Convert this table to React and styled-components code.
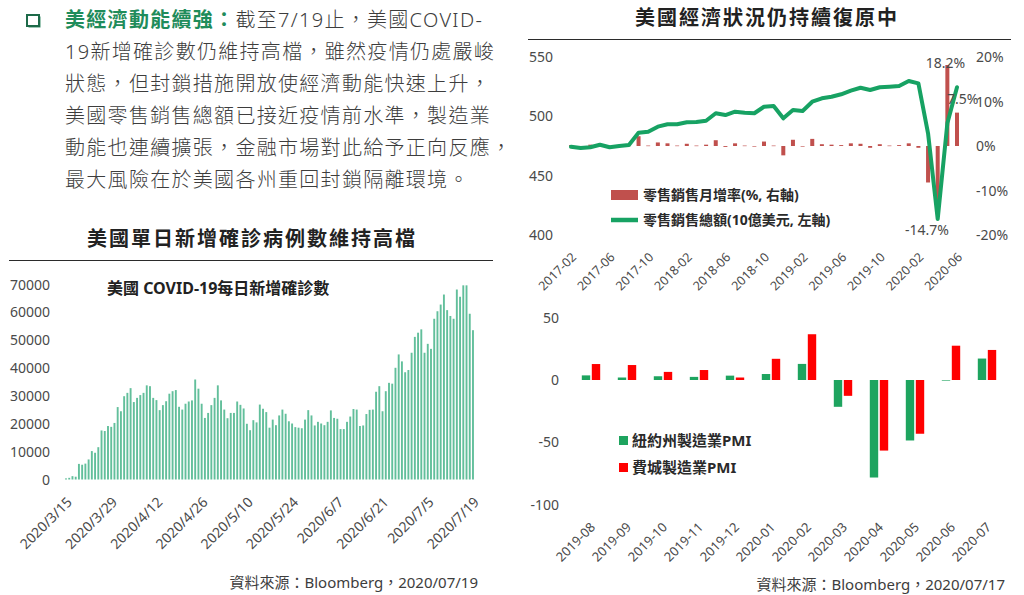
import React from "react";
import styled, { createGlobalStyle } from "styled-components";

const COLORS = {
  text: "#3d3d3d",
  dark: "#222222",
  axis: "#4a4a4a",
  accent: "#1f8c5b",
  icon: "#1d6a49",
  covid: "#62bf9b",
  line: "#17a263",
  retail: "#c0504d",
  pmiGreen: "#1ea45f",
  pmiRed: "#ff0000",
};

// 2020/3/15 - 2020/7/19, thousands of new cases per day
const covidCases = [
  0.4, 0.6, 1.2, 1.0, 5.6, 5.3, 5.7, 7.2, 10.2, 9.6, 11.6, 17.6, 17.4, 19.2,
  18.9, 20.3, 26, 24.5, 29.9, 31.1, 32.8, 27.8, 29.3, 30.3, 31.1, 33.8, 33.5,
  29.3, 28.5, 24.9, 26.7, 28.1, 30.8, 31.7, 32.1, 26.1, 25.1, 27.2, 28, 28.4,
  35.9, 32.6, 27.2, 22.1, 23.9, 26.7, 29.3, 33.8, 28.4, 25.1, 22, 23.9, 23.9,
  28, 26.8, 25.5, 20, 17.7, 21.3, 20.5, 26.9, 25.4, 24.2, 18.6, 21.5, 19.5, 23,
  25.1, 23.6, 20.9, 20.1, 18.8, 18.6, 18.4, 21.5, 24.9, 23, 19.4, 20.7, 20.1,
  19.5, 20.7, 24.8, 22.1, 21.8, 18.1, 18.1, 20.7, 22.6, 25.3, 25.1, 19.2, 19.4,
  23.5, 25, 25.1, 31.5, 33.5, 24.5, 31.7, 34.7, 34.4, 40.1, 44.9, 42.4, 38.5,
  39.3, 45.5, 51.2, 52.7, 53.9, 45.5, 48.7, 46.9, 57.7, 60.4, 62.8, 66.4, 60.8,
  58.7, 57.7, 68.2, 65.6, 69.7, 69.7, 59.5, 53.6,
];
const covidDates = [
  "2020/3/15",
  "2020/3/29",
  "2020/4/12",
  "2020/4/26",
  "2020/5/10",
  "2020/5/24",
  "2020/6/7",
  "2020/6/21",
  "2020/7/5",
  "2020/7/19",
];

// 2017-02 - 2020-06
const retailTotal = [
  474.4, 473.3, 473.9, 476.1, 473.9, 475.0, 475.8, 486.2, 487.0, 491.3, 493.3,
  493.3, 495.0, 495.2, 496.3, 502.6, 501.1, 503.9, 503.1, 502.6, 508.1, 508.7,
  498.3, 505.3, 504.5, 512.3, 515.2, 516.5, 518.6, 521.6, 524.1, 522.2, 524.5,
  525.0, 525.6, 529.8, 527.8, 485.7, 413.5, 494.1, 524.5,
];
const retailGrowth = [
  0.2, -0.2, 0.3, 0.5, -0.2, 0.2, 0.1, 2.2, 0.1, 0.8, 0.6, 0.1, 0.5, 0.1, 0.3,
  1.3, -0.2, 0.6, 0.1, -0.1, 1.0, 0.1, -2.1, 1.4, -0.1, 1.6, 0.4, 0.3, 0.2, 0.6,
  0.5, -0.4, 0.4, 0.1, 0.2, 0.6, -0.4, -8.2, -14.7, 18.2, 7.5,
];
const retailMonths = [
  "2017-02",
  "2017-06",
  "2017-10",
  "2018-02",
  "2018-06",
  "2018-10",
  "2019-02",
  "2019-06",
  "2019-10",
  "2020-02",
  "2020-06",
];

const pmiData = [
  { month: "2019-08", ny: 3.7, phil: 12.8 },
  { month: "2019-09", ny: 2, phil: 12 },
  { month: "2019-10", ny: 3, phil: 6.5 },
  { month: "2019-11", ny: 2.5, phil: 8 },
  { month: "2019-12", ny: 3.5, phil: 2 },
  { month: "2020-01", ny: 4.8, phil: 17 },
  { month: "2020-02", ny: 12.9, phil: 36.7 },
  { month: "2020-03", ny: -21.5, phil: -12.7 },
  { month: "2020-04", ny: -78.2, phil: -56.6 },
  { month: "2020-05", ny: -48.5, phil: -43.1 },
  { month: "2020-06", ny: -0.2, phil: 27.5 },
  { month: "2020-07", ny: 17.2, phil: 24.1 },
];

const covidX = (k) => 66 + k * 3.23;
const covidY = (v) => 480.5 - (v * 195) / 70;
const salesX = (i) => 571 + i * 9.65;
const salesY = (v) => 235 - ((v - 400) * 178) / 150;
const pctY = (p) => 146 - p * 4.45;
const pmiX = (j) => 591 + j * 36;
const pmiY = (v) => 380 - v * 1.247;

const bar = (x, y0, y1, width) => ({
  x: x - width / 2,
  y: Math.min(y0, y1),
  width,
  height: Math.max(Math.abs(y1 - y0), 0.6),
});

function CheckIcon() {
  return (
    <Icon viewBox="0 0 16 15" width="16" height="15">
      <rect x="2.5" y="2.5" width="12" height="11" fill="#3f8f6c" />
      <rect x="1" y="1" width="12" height="11" fill="#fff" stroke={COLORS.icon} strokeWidth="2" />
    </Icon>
  );
}

function CovidChart() {
  const yTicks = [0, 10, 20, 30, 40, 50, 60, 70];
  return (
    <ChartSvg viewBox="0 262 510 310" width="510" height="310">
      {yTicks.map((t) => (
        <AxisText key={t} x="50" y={covidY(t) + 5} textAnchor="end">
          {t * 1000}
        </AxisText>
      ))}
      <InnerTitle x="107" y="295">
        美國 COVID-19每日新增確診數
      </InnerTitle>
      {covidCases.map((v, k) => (
        <rect key={k} {...bar(covidX(k), covidY(0), covidY(v), 1.9)} fill={COLORS.covid} />
      ))}
      {covidDates.map((d, n) => {
        const x = covidX(n * 14) + 7;
        return (
          <TickText key={d} x={x} y="504" textAnchor="end" transform={`rotate(-45 ${x} 504)`}>
            {d}
          </TickText>
        );
      })}
    </ChartSvg>
  );
}

function RetailChart() {
  const leftTicks = [550, 500, 450, 400];
  const rightTicks = [20, 10, 0, -10, -20];
  const points = retailTotal.map((v, i) => `${salesX(i)},${salesY(v)}`).join(" ");
  return (
    <ChartSvg viewBox="510 40 514 256" width="514" height="256">
      {leftTicks.map((t) => (
        <AxisText key={t} x="553" y={salesY(t) + 5} textAnchor="end">
          {t}
        </AxisText>
      ))}
      {rightTicks.map((t) => (
        <AxisText key={t} x="976" y={pctY(t) + 5}>
          {`${t}%`}
        </AxisText>
      ))}
      {retailGrowth.map((p, i) => (
        <rect key={i} {...bar(salesX(i), pctY(0), pctY(p), 4)} fill={COLORS.retail} />
      ))}
      <polyline
        points={points}
        fill="none"
        stroke={COLORS.line}
        strokeWidth="4"
        strokeLinejoin="round"
        strokeLinecap="round"
      />
      <AxisText x={salesX(39) - 2} y="68" textAnchor="middle">18.2%</AxisText>
      <AxisText x="947" y="104">7.5%</AxisText>
      <AxisText x="927" y="235" textAnchor="middle">-14.7%</AxisText>
      <rect x="611" y="190" width="27" height="10" fill={COLORS.retail} />
      <LegendText x="643" y="200">零售銷售月增率(%, 右軸)</LegendText>
      <line x1="611" y1="220" x2="638" y2="220" stroke={COLORS.line} strokeWidth="4.5" />
      <LegendText x="643" y="225">零售銷售總額(10億美元, 左軸)</LegendText>
      {retailMonths.map((m, n) => {
        const x = salesX(n * 4) + 6;
        return (
          <TickText key={m} $size="12.5px" x={x} y="258" textAnchor="end" transform={`rotate(-45 ${x} 258)`}>
            {m}
          </TickText>
        );
      })}
    </ChartSvg>
  );
}

function PmiChart() {
  const ticks = [50, 0, -50, -100];
  return (
    <ChartSvg viewBox="510 296 514 277" width="514" height="277">
      {ticks.map((t) => (
        <AxisText key={t} x="559" y={pmiY(t) + 5} textAnchor="end">
          {t}
        </AxisText>
      ))}
      {pmiData.map((d, j) => (
        <g key={d.month}>
          <rect {...bar(pmiX(j) - 5, pmiY(0), pmiY(d.ny), 8.4)} fill={COLORS.pmiGreen} />
          <rect {...bar(pmiX(j) + 5, pmiY(0), pmiY(d.phil), 8.4)} fill={COLORS.pmiRed} />
        </g>
      ))}
      <rect x="619" y="436" width="9" height="9" fill={COLORS.pmiGreen} />
      <PmiLegendText x="632" y="446">紐約州製造業PMI</PmiLegendText>
      <rect x="619" y="463" width="9" height="9" fill={COLORS.pmiRed} />
      <PmiLegendText x="632" y="473">費城製造業PMI</PmiLegendText>
      {pmiData.map((d, j) => {
        const x = pmiX(j) + 5;
        return (
          <TickText key={d.month} $size="13px" x={x} y="528" textAnchor="end" transform={`rotate(-45 ${x} 528)`}>
            {d.month}
          </TickText>
        );
      })}
    </ChartSvg>
  );
}

export default function App() {
  return (
    <>
      <GlobalStyle />
      <Page>
        <Column>
          <Bullet>
            <CheckIcon />
            <Paragraph>
              <Line>
                <Highlight>美經濟動能續強：</Highlight>截至7/19止，美國COVID-
              </Line>
              <Line>19新增確診數仍維持高檔，雖然疫情仍處嚴峻</Line>
              <Line>狀態，但封鎖措施開放使經濟動能快速上升，</Line>
              <Line>美國零售銷售總額已接近疫情前水準，製造業</Line>
              <Line>動能也連續擴張，金融市場對此給予正向反應，</Line>
              <Line>最大風險在於美國各州重回封鎖隔離環境。</Line>
            </Paragraph>
          </Bullet>
          <ChartTitle $offset="6px" $top="28px">美國單日新增確診病例數維持高檔</ChartTitle>
          <Rule $left="9px" $right="17px" />
          <CovidChart />
          <Source $right="32px">資料來源：Bloomberg，2020/07/19</Source>
        </Column>
        <Column>
          <ChartTitle $offset="0px" $top="3px">美國經濟狀況仍持續復原中</ChartTitle>
          <Rule $left="18px" $right="13px" />
          <RetailChart />
          <PmiChart />
          <Source $right="19px">資料來源：Bloomberg，2020/07/17</Source>
        </Column>
      </Page>
    </>
  );
}

const GlobalStyle = createGlobalStyle`
  html, body {
    margin: 0;
    padding: 0;
    background: #ffffff;
  }
  body {
    font-family: "Noto Sans", "Noto Sans CJK TC", sans-serif;
  }
`;

const Page = styled.div`
  width: 1024px;
  height: 595px;
  display: grid;
  grid-template-columns: 510px 514px;
  overflow: hidden;
  background: #ffffff;
`;

const Column = styled.section`
  display: flex;
  flex-direction: column;
  min-width: 0;
`;

const Bullet = styled.div`
  display: flex;
  align-items: flex-start;
  gap: 23px;
  margin-top: 4px;
  padding-left: 26px;
`;

const Icon = styled.svg`
  flex: none;
  margin-top: 10px;
`;

const Paragraph = styled.p`
  margin: 0;
  font-size: 20px;
  font-weight: 300;
  line-height: 32px;
  letter-spacing: 1.3px;
  color: ${COLORS.text};
`;

const Line = styled.span`
  display: block;
  white-space: nowrap;
`;

const Highlight = styled.strong`
  color: ${COLORS.accent};
  font-weight: 700;
`;

const ChartTitle = styled.h2`
  margin: ${({ $top }) => $top} 0 0;
  padding-right: ${({ $offset }) => $offset};
  font-size: 20px;
  line-height: 30px;
  font-weight: 700;
  letter-spacing: 2px;
  text-align: center;
  color: ${COLORS.dark};
`;

const Rule = styled.hr`
  margin: 6px ${({ $right }) => $right} 0 ${({ $left }) => $left};
  border: none;
  height: 1px;
  background: #2b2b2b;
`;

const ChartSvg = styled.svg`
  display: block;
  flex: none;
  overflow: visible;
  font-family: "Noto Sans", "Noto Sans CJK TC", sans-serif;
`;

const AxisText = styled.text`
  font-size: 14px;
  fill: ${COLORS.axis};
`;

const TickText = styled.text`
  font-size: ${({ $size }) => $size || "14px"};
  fill: ${COLORS.axis};
`;

const InnerTitle = styled.text`
  font-size: 16px;
  font-weight: 700;
  fill: ${COLORS.dark};
`;

const LegendText = styled.text`
  font-size: 14px;
  font-weight: 700;
  fill: #2a2a2a;
`;

const PmiLegendText = styled.text`
  font-size: 15px;
  font-weight: 700;
  fill: #2a2a2a;
`;

const Source = styled.div`
  padding-right: ${({ $right }) => $right};
  text-align: right;
  font-size: 15px;
  line-height: 22px;
  color: ${COLORS.text};
  white-space: nowrap;
`;
